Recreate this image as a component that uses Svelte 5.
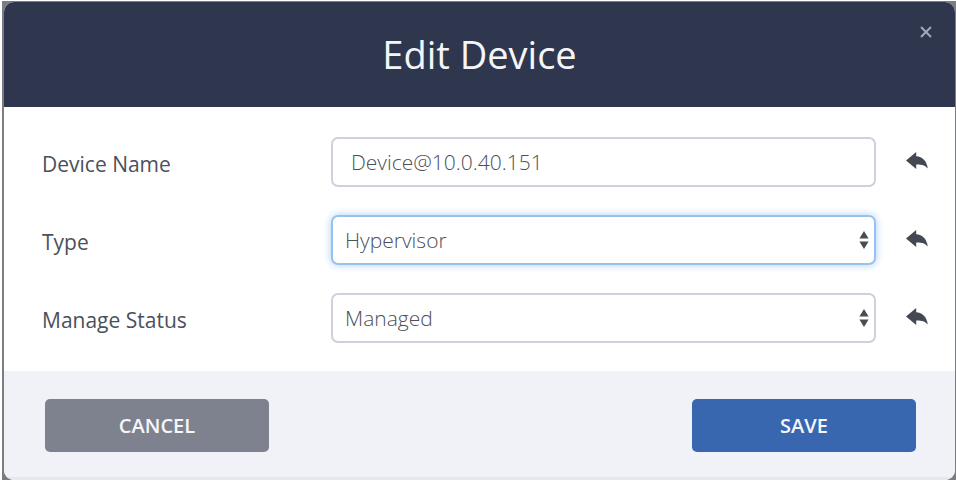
<script>
  const initial = { name: 'Device@10.0.40.151', type: 'Hypervisor', status: 'Managed' };
  let device = $state({ ...initial });

  function revert(key) {
    device[key] = initial[key];
  }
</script>

{#snippet undo(key, label)}
  <button class="undo" type="button" aria-label={label} onclick={() => revert(key)}>
    <svg viewBox="0 0 22 20" width="22" height="20" aria-hidden="true">
      <path d="M0 8.4 L10.2 0 V4.2 C16.4 4.6 20.8 8.8 21.8 16.4 C18.6 12.9 15.6 12.3 10.2 12.4 V17 Z" />
    </svg>
  </button>
{/snippet}

{#snippet arrows()}
  <svg class="arrows" viewBox="0 0 10 18" width="10" height="18" aria-hidden="true">
    <path d="M5 0 L9.6 7.6 H0.4 Z M5 18 L0.4 10.4 H9.6 Z" />
  </svg>
{/snippet}

<div class="backdrop">
  <form class="dialog" role="dialog" aria-labelledby="title" onsubmit={(e) => e.preventDefault()}>
    <header>
      <h1 id="title">Edit Device</h1>
      <button class="close" type="button" aria-label="Close">
        <svg viewBox="0 0 12 12" width="12" height="12" aria-hidden="true">
          <path d="M1 1 L11 11 M11 1 L1 11" />
        </svg>
      </button>
    </header>

    <div class="fields">
      <div class="row">
        <label for="name">Device Name</label>
        <input id="name" type="text" bind:value={device.name} />
        {@render undo('name', 'Revert device name')}
      </div>
      <div class="row">
        <label for="type">Type</label>
        <div class="select">
          <select id="type" class="active" bind:value={device.type}>
            <option>Hypervisor</option>
          </select>
          {@render arrows()}
        </div>
        {@render undo('type', 'Revert type')}
      </div>
      <div class="row">
        <label for="status">Manage Status</label>
        <div class="select">
          <select id="status" bind:value={device.status}>
            <option>Managed</option>
          </select>
          {@render arrows()}
        </div>
        {@render undo('status', 'Revert manage status')}
      </div>
    </div>

    <footer>
      <button class="action cancel" type="button">CANCEL</button>
      <button class="action save" type="submit">SAVE</button>
    </footer>
  </form>
</div>

<style>
  :global(body) {
    background: #fff;
  }

  .backdrop {
    margin: 1px 0 0 2px;
    padding: 1px 1px 0 2px;
    background: #7b7e81;
    font-family: 'Open Sans', 'Noto Sans', sans-serif;
    color: #4c505a;
  }

  .dialog {
    border-radius: 10px;
    overflow: hidden;
    background: #fff;
  }

  header {
    position: relative;
    display: flex;
    align-items: center;
    justify-content: center;
    box-sizing: border-box;
    height: 105px;
    padding-bottom: 2px;
    background: #2f374f;
  }

  h1 {
    margin: 0;
    color: #f4f5f8;
    font-size: 38px;
    font-weight: 400;
    line-height: 52px;
  }

  button {
    font-family: inherit;
    border: 0;
    padding: 0;
    cursor: pointer;
  }

  .close {
    position: absolute;
    top: 24px;
    right: 23px;
    display: flex;
    background: none;
  }

  .close path {
    fill: none;
    stroke: #a4a9b8;
    stroke-width: 2;
  }

  .fields {
    display: flex;
    flex-direction: column;
    gap: 28px;
    padding: 30px 27px 28px 38px;
  }

  .row {
    display: grid;
    grid-template-columns: 289px 1fr 22px;
    align-items: center;
  }

  label {
    padding-top: 4px;
    font-size: 21px;
    line-height: 28px;
  }

  input,
  select {
    box-sizing: border-box;
    width: 100%;
    height: 50px;
    border: 2px solid #cfd0dc;
    border-radius: 7px;
    outline: none;
    background: #fff;
    color: #4c4f58;
    font-family: inherit;
    font-size: 21px;
    font-weight: 300;
  }

  input {
    padding: 0 18px;
  }

  select {
    appearance: none;
    padding: 0 32px 0 12px;
  }

  .active {
    border-color: #97c2f0;
    box-shadow: 0 0 9px #a9cff5;
  }

  .row > input,
  .select {
    margin-right: 30px;
  }

  .row > input {
    width: auto;
  }

  .select {
    position: relative;
  }

  .arrows {
    position: absolute;
    top: 16px;
    right: 7px;
    fill: #484c54;
    pointer-events: none;
  }

  .undo {
    display: flex;
    background: none;
  }

  .undo path {
    fill: #444852;
  }

  footer {
    display: flex;
    justify-content: space-between;
    padding: 28px 39px 25px 41px;
    border-bottom: 3px solid #e6e8f1;
    background: #f0f2f8;
  }

  .action {
    width: 224px;
    height: 53px;
    border-radius: 5px;
    color: #f4f6fa;
    font-size: 20px;
    font-weight: 600;
  }

  .cancel {
    background: #7e818e;
  }

  .save {
    background: #3867b0;
  }
</style>
